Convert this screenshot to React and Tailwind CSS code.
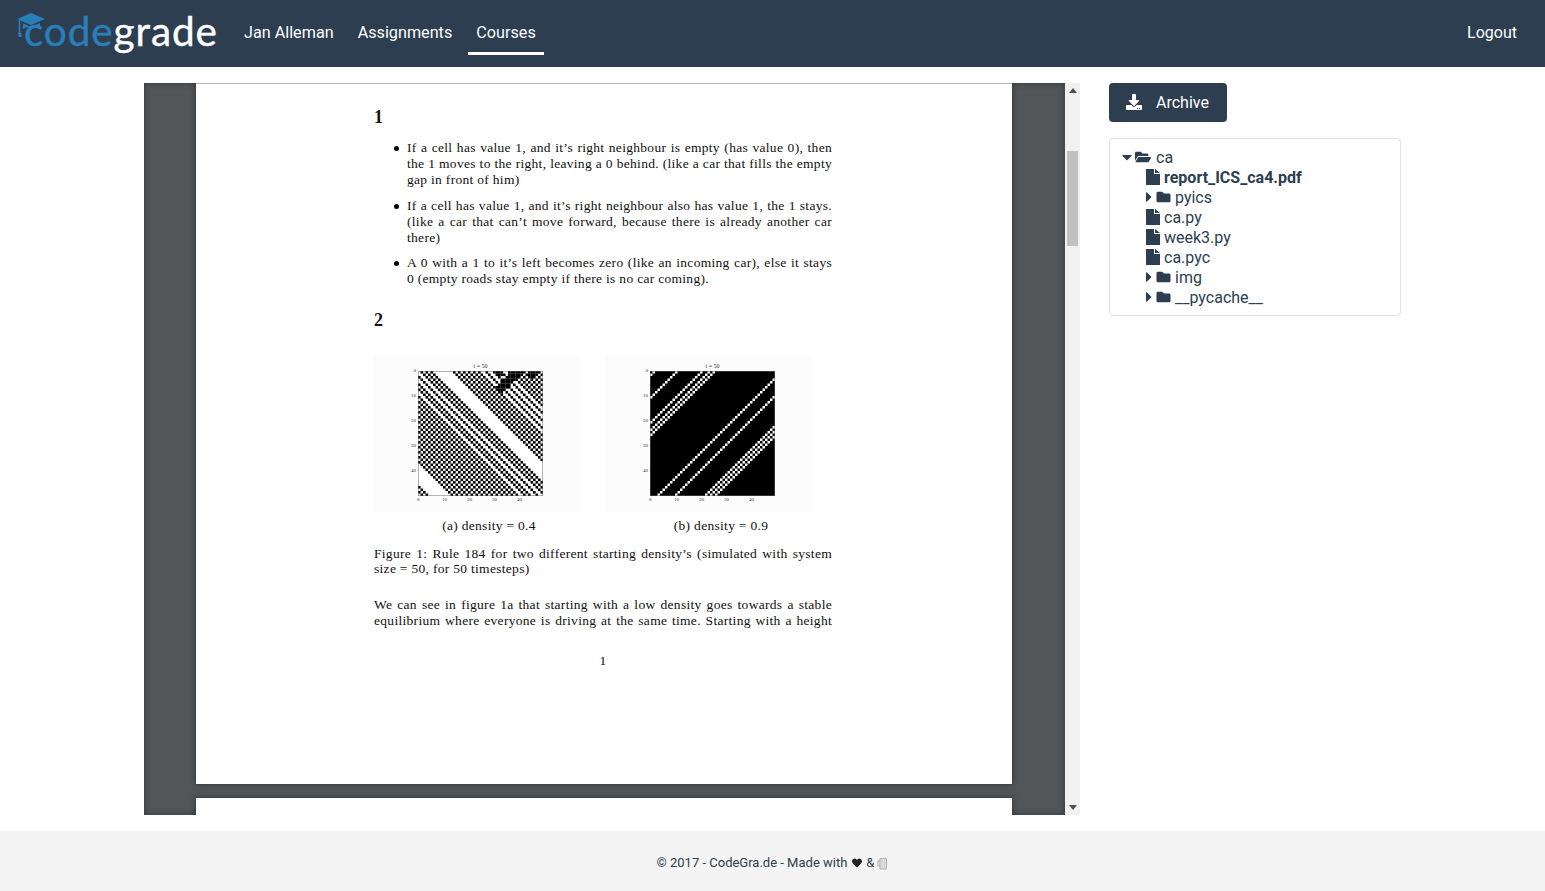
import React from "react";
import { FaCaretDown, FaCaretRight, FaDownload, FaFolder, FaFolderOpen, FaHeart } from "react-icons/fa";

const navLinks = ["Jan Alleman", "Assignments", "Courses"];

const tree = [
  { name: "report_ICS_ca4.pdf", bold: true },
  { name: "pyics", dir: true },
  { name: "ca.py" },
  { name: "week3.py" },
  { name: "ca.pyc" },
  { name: "img", dir: true },
  { name: "__pycache__", dir: true },
];

// Rule 184 settles into diagonals, so each plot is a list of diagonals plus the start of the run
const lowBlack = new Set([
  -48, -46, -36, -34, -32, -30, -28, -26, -24, -22, -20, -18, -16, -14, -12, -10, -7, -5, -2, 1, 3, 5,
  14, 16, 18, 20, 22, 24, 27, 30, 33, 36, 38, 40, 42, 44, 46, 48,
]);
const highWhite = new Set([1, 10, 20, 23, 25, 52, 59, 71, 73, 75]);

function lowCell(x, y) {
  if (x + y >= 37 && x + y <= 41 && x - y >= 24) return true;
  if (y < 2 && x >= 31 && x <= 33) return true;
  if (y < 3 && x >= 44 && x + y < 48) return true;
  return lowBlack.has(x - y);
}

function Plot({ low }) {
  const rects = [];
  for (let y = 0; y < 50; y++) {
    for (let x = 0; x < 50; x++) {
      if (low && lowCell(x, y)) rects.push(<rect key={x + "-" + y} x={x * 2.5} y={y * 2.5} width="2.6" height="2.6" fill="#000" />);
      if (!low && highWhite.has(x + y)) rects.push(<rect key={x + "-" + y} x={x * 2.5} y={y * 2.5} width="2.5" height="2.5" fill="#fff" />);
    }
  }
  const ticks = [0, 10, 20, 30, 40];
  return (
    <div className="relative w-[206px] h-[156px] bg-[#fcfcfc]">
      <svg className="absolute left-[44px] top-[15px] blur-[0.35px]" width="125" height="125" viewBox="0 0 125 125">
        <rect width="125" height="125" fill={low ? "#fff" : "#000"} />
        {rects}
        <rect x="0.25" y="0.25" width="124.500" height="124.500" fill="none" stroke="#666" strokeWidth="0.5" />
      </svg>
      <span className="absolute left-[44px] w-[125px] top-[7px] text-center text-[6px] leading-[7px] tracking-normal text-[#333]">t = 50</span>
      {ticks.map((t) => (
        <span key={"y" + t} className="absolute left-[34px] w-[8px] text-right text-[5px] leading-[6px] tracking-normal text-[#333]" style={{ top: 12 + t * 2.5 }}>
          {t}
        </span>
      ))}
      {ticks.map((t) => (
        <span key={"x" + t} className="absolute top-[141px] text-[5px] leading-[6px] tracking-normal text-[#333]" style={{ left: 43 + t * 2.5 }}>
          {t}
        </span>
      ))}
    </div>
  );
}

// PDF text is set line by line, the lines are stretched like the justified original
function Line({ children, last }) {
  return <div className={last ? "h-4 whitespace-nowrap" : "h-4 whitespace-nowrap [text-align:justify] [text-align-last:justify]"}>{children}</div>;
}

function Bullet({ lines }) {
  return (
    <div className="flex">
      <div className="w-[33px] h-4 flex items-center justify-end pr-[8px] shrink-0">
        <div className="w-[5px] h-[5px] rounded-full bg-black" />
      </div>
      <div className="w-[425px]">
        {lines.map((l, i) => (
          <Line key={i} last={i === lines.length - 1}>{l}</Line>
        ))}
      </div>
    </div>
  );
}

function PdfPage() {
  return (
    <div className="w-[816px] h-[701px] bg-white shrink-0 border-t border-[#b4b4b4] shadow-[0_0_6px_rgba(0,0,0,0.45)] pt-[21px] pl-[178px] font-['Liberation_Serif',serif] text-[13.5px] tracking-[0.3px] leading-4 text-[#111]">
      <div className="w-[458px]">
        <div className="text-[18px] leading-[24px] font-bold mb-[11px]">1</div>
        <Bullet
          lines={[
            "If a cell has value 1, and it’s right neighbour is empty (has value 0), then",
            "the 1 moves to the right, leaving a 0 behind. (like a car that fills the empty",
            "gap in front of him)",
          ]}
        />
        <div className="h-[10px]" />
        <Bullet
          lines={[
            "If a cell has value 1, and it’s right neighbour also has value 1, the 1 stays.",
            "(like a car that can’t move forward, because there is already another car",
            "there)",
          ]}
        />
        <div className="h-[9px]" />
        <Bullet
          lines={[
            "A 0 with a 1 to it’s left becomes zero (like an incoming car), else it stays",
            "0 (empty roads stay empty if there is no car coming).",
          ]}
        />
        <div className="text-[18px] leading-[24px] font-bold mt-[21px] mb-[24px]">2</div>
        <div className="flex gap-[26px]">
          <Plot low />
          <Plot />
        </div>
        <div className="flex mt-[6px] h-4">
          <div className="w-[206px] text-center pl-[24px]">(a) density = 0.4</div>
          <div className="w-[26px]" />
          <div className="w-[206px] text-center pl-[24px]">(b) density = 0.9</div>
        </div>
        <div className="mt-[12px]">
          <Line>Figure 1: Rule 184 for two different starting density’s (simulated with system</Line>
          <div className="-mt-[1px]">
            <Line last>size = 50, for 50 timesteps)</Line>
          </div>
        </div>
        <div className="mt-[20px]">
          <Line>We can see in figure 1a that starting with a low density goes towards a stable</Line>
          <Line>equilibrium where everyone is driving at the same time. Starting with a height</Line>
        </div>
        <div className="mt-[24px] text-center">1</div>
      </div>
    </div>
  );
}

function FileIcon() {
  return (
    <svg className="shrink-0 -mt-[3px]" width="14" height="16" viewBox="0 0 14 16">
      <path d="M0 0h8v5h6v11H0z" fill="currentColor" />
      <path d="M9 0l5 4H9z" fill="currentColor" />
    </svg>
  );
}

export default function App() {
  return (
    <div className="h-[891px] flex flex-col bg-white overflow-hidden font-['Roboto',sans-serif] text-[#2c3e50]">
      <nav className="h-[67px] shrink-0 bg-[#2c3e50] flex items-center pl-[17px] pr-[28px] text-white">
        <div className="relative w-[199px] h-[67px] shrink-0 pl-[7px] font-['Lato',sans-serif] text-[40.5px] leading-[62px] tracking-[0.9px] [-webkit-text-stroke:0.4px]">
          <span className="text-[#2a7fb8]">code</span>
          <span>grade</span>
          <svg className="absolute left-0 top-[13px]" width="28" height="25" viewBox="0 0 28 25">
            <path d="M14 0 28 6 14 12 0 6z" fill="#2a7fb8" />
            <path d="M6 10.500v5.500c5-3 11-3 17-1v-5l-9 4z" fill="#2a7fb8" />
            <path d="M2.500 7v15" stroke="#2a7fb8" strokeWidth="1.500" fill="none" />
            <rect x="1.500" y="20" width="3" height="4" fill="#2a7fb8" />
          </svg>
        </div>
        <div className="flex ml-[20px] -mt-[1px] gap-[8px] text-[16.2px]">
          {navLinks.map((l) => (
            <a key={l} className={l === "Courses" ? "h-[44px] px-[8px] pt-[4px] flex items-center border-b-[3px] border-white" : "h-[44px] px-[8px] pt-[4px] flex items-center border-b-[3px] border-transparent"}>
              {l}
            </a>
          ))}
        </div>
        <a className="ml-auto -mt-[2px] text-[16px]">Logout</a>
      </nav>

      <main className="flex-1 min-h-0 flex pt-4 pl-[144px]">
        <div className="w-[936px] h-[732px] flex shrink-0">
          <div className="w-[921px] h-full pr-[1px] bg-[#525659] overflow-hidden flex flex-col items-center gap-[14px] shadow-[inset_0_0_6px_rgba(0,0,0,0.35)]">
            <PdfPage />
            <div className="w-[816px] h-[40px] bg-white shrink-0 shadow-[0_0_6px_rgba(0,0,0,0.45)]" />
          </div>
          <div className="relative w-[15px] h-full bg-[#f1f1f1] flex flex-col items-center justify-between">
            <svg className="mt-[5px]" width="8" height="5" viewBox="0 0 8 5"><path d="M4 0 8 5H0z" fill="#505050" /></svg>
            <div className="absolute left-[2px] top-[68px] w-[11px] h-[95px] bg-[#c1c1c1]" />
            <svg className="mb-[5px]" width="8" height="5" viewBox="0 0 8 5"><path d="M0 0h8L4 5z" fill="#505050" /></svg>
          </div>
        </div>
        <aside className="ml-[29px] w-[292px] shrink-0">
          <button className="w-[118px] h-[39px] rounded bg-[#2c3e50] text-white text-[16px] flex items-center pl-[17px] gap-[14px]">
            <FaDownload className="w-4 h-4 -mt-[2px]" />
            Archive
          </button>
          <div className="mt-4 h-[178px] border border-[#dee2e6] rounded pt-[9px] pl-3 text-[16px] leading-5">
            <div className="flex items-center h-5">
              <FaCaretDown className="w-[10px] h-4 -mt-[3px]" />
              <FaFolderOpen className="w-4 h-4 ml-[3px] -mt-[3px]" />
              <span className="ml-[5px]">ca</span>
            </div>
            {tree.map((t) => (
              <div key={t.name} className="flex items-center h-5 pl-6">
                {t.dir ? (
                  <>
                    <FaCaretRight className="w-[6px] h-4 -mt-[2px]" />
                    <FaFolder className="w-[15px] h-[14px] ml-1 -mt-[3px]" />
                    <span className="ml-1">{t.name}</span>
                  </>
                ) : (
                  <>
                    <FileIcon />
                    <span className={t.bold ? "ml-1 font-bold" : "ml-1"}>{t.name}</span>
                  </>
                )}
              </div>
            ))}
          </div>
        </aside>
      </main>

      <footer className="h-[60px] shrink-0 bg-[#f4f4f4] pt-[4px] flex items-center justify-center text-[13px] text-[#2c3e50]">
        © 2017 - CodeGra.de - Made with
        <FaHeart className="w-[12px] h-[10px] ml-1 mr-[3px] text-[#222]" />
        &amp;
        <svg className="ml-[3px]" width="11" height="13" viewBox="0 0 11 13">
          <path d="M3 1.500h6.500v10.500H3z" fill="#e8e8e8" stroke="#aaa" />
          <path d="M5 1v11M7.500 1v11" stroke="#c4c4c4" fill="none" />
          <path d="M3 4H1v5h2" stroke="#aaa" fill="none" />
        </svg>
      </footer>
    </div>
  );
}
